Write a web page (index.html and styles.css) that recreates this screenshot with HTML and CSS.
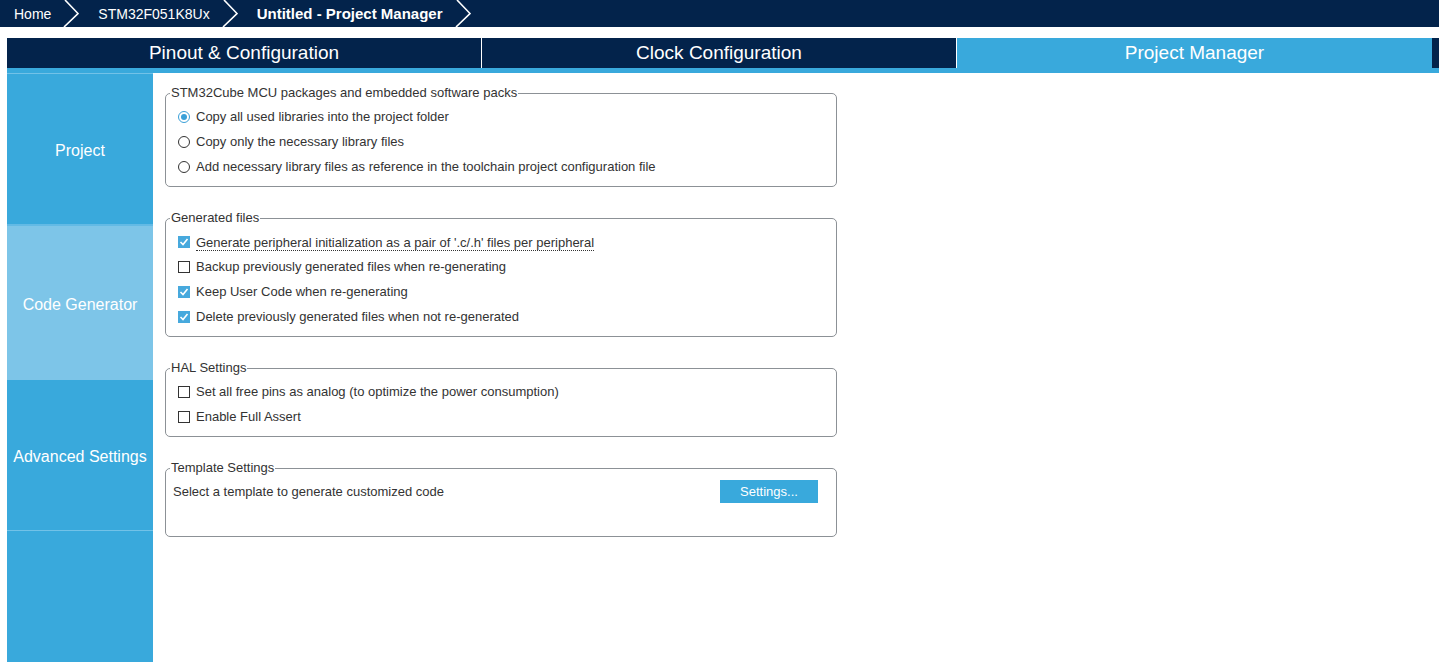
FILE: index.html
```html
<!DOCTYPE html>
<html lang="en">
<head>
    <meta charset="UTF-8">
    <title>Untitled - Project Manager</title>
    <link rel="stylesheet" href="styles.css">
</head>
<body>

    <!-- Breadcrumb bar -->
    <div class="topbar">
        <span class="crumb">Home</span>
        <svg class="chevron" width="16" height="27" viewBox="0 0 16 27"><polyline points="2,0 15,13.5 1,27" fill="none" stroke="#ffffff" stroke-width="1.6"/></svg>
        <span class="crumb">STM32F051K8Ux</span>
        <svg class="chevron" width="16" height="27" viewBox="0 0 16 27"><polyline points="2,0 15,13.5 1,27" fill="none" stroke="#ffffff" stroke-width="1.6"/></svg>
        <span class="crumb current">Untitled - Project Manager</span>
        <svg class="chevron" width="16" height="27" viewBox="0 0 16 27"><polyline points="2,0 15,13.5 1,27" fill="none" stroke="#ffffff" stroke-width="1.6"/></svg>
    </div>

    <div class="shell">
        <!-- Main tabs -->
        <div class="tabs">
            <div class="tab">Pinout &amp; Configuration</div>
            <div class="tab">Clock Configuration</div>
            <div class="tab active">Project Manager</div>
        </div>
        <div class="strip"></div>

        <div class="workspace">
            <!-- Side menu -->
            <div class="sidebar">
                <div class="side-item first">Project</div>
                <div class="side-item selected">Code Generator</div>
                <div class="side-item last">Advanced Settings</div>
            </div>

            <!-- Settings -->
            <div class="content">
                <fieldset class="group">
                    <legend>STM32Cube MCU packages and embedded software packs</legend>
                    <div class="option"><span class="radio on"></span><span>Copy all used libraries into the project folder</span></div>
                    <div class="option"><span class="radio"></span><span>Copy only the necessary library files</span></div>
                    <div class="option"><span class="radio"></span><span>Add necessary library files as reference in the toolchain project configuration file</span></div>
                </fieldset>

                <fieldset class="group">
                    <legend>Generated files</legend>
                    <div class="option"><span class="check on"><svg width="12" height="12" viewBox="0 0 12 12"><polyline points="2.5,6 5,8.5 9.5,3" fill="none" stroke="#ffffff" stroke-width="1.6"/></svg></span><span class="focused">Generate peripheral initialization as a pair of '.c/.h' files per peripheral</span></div>
                    <div class="option"><span class="check"></span><span>Backup previously generated files when re-generating</span></div>
                    <div class="option"><span class="check on"><svg width="12" height="12" viewBox="0 0 12 12"><polyline points="2.5,6 5,8.5 9.5,3" fill="none" stroke="#ffffff" stroke-width="1.6"/></svg></span><span>Keep User Code when re-generating</span></div>
                    <div class="option"><span class="check on"><svg width="12" height="12" viewBox="0 0 12 12"><polyline points="2.5,6 5,8.5 9.5,3" fill="none" stroke="#ffffff" stroke-width="1.6"/></svg></span><span>Delete previously generated files when not re-generated</span></div>
                </fieldset>

                <fieldset class="group">
                    <legend>HAL Settings</legend>
                    <div class="option"><span class="check"></span><span>Set all free pins as analog (to optimize the power consumption)</span></div>
                    <div class="option"><span class="check"></span><span>Enable Full Assert</span></div>
                </fieldset>

                <fieldset class="group template">
                    <legend>Template Settings</legend>
                    <div class="template-row">
                        <span class="template-text">Select a template to generate customized code</span>
                        <button class="settings-btn">Settings...</button>
                    </div>
                </fieldset>
            </div>
        </div>
    </div>

</body>
</html>
```

FILE: styles.css
```css
/* STM32CubeMX look */
body {
    font-family: 'Liberation Sans', Arial, sans-serif;
    background-color: #ffffff;
    color: #333333;
    margin: 0;
    padding: 0;
}

/* Breadcrumb bar */
.topbar {
    height: 27px;
    background-color: #03234b;
    display: flex;
    align-items: center;
    padding-left: 14px;
}

.crumb {
    color: #ffffff;
    font-size: 14px;
}

.crumb.current {
    font-size: 15px;
    font-weight: bold;
}

.chevron {
    display: block;
    margin: 0 19px 0 12px;
}

/* Tabs */
.shell {
    margin-top: 11px;
    padding-left: 7px;
}

.tabs {
    display: flex;
    height: 30px;
    background-color: #03234b;
}

.tab {
    width: 475px;
    box-sizing: border-box;
    border-right: 1px solid #ffffff;
    color: #ffffff;
    font-size: 19px;
    line-height: 30px;
    text-align: center;
}

.tab.active {
    background-color: #39a9dc;
    border-right: none;
}

.strip {
    height: 5px;
    background-color: #39a9dc;
}

/* Side menu */
.workspace {
    display: flex;
    height: calc(100vh - 73px);
}

.sidebar {
    width: 146px;
    flex-shrink: 0;
    background-color: #39a9dc;
}

.side-item {
    display: flex;
    align-items: center;
    justify-content: center;
    color: #ffffff;
    font-size: 16px;
    padding-top: 3px;
    box-sizing: border-box;
}

.side-item.first {
    height: 151px;
    border-top: 1px solid #72c2e8;
}

.side-item.selected {
    height: 156px;
    border-top: 2px solid #62bae5;
    background-color: #7dc5e8;
}

.side-item.last {
    height: 151px;
    border-bottom: 1px solid #72c2e8;
}

/* Settings groups */
.content {
    padding: 13px 0 0 12px;
}

.group {
    width: 672px;
    box-sizing: border-box;
    margin: 0 0 24px 0;
    padding: 4px 12px 7px 12px;
    border: 1px solid #8c9196;
    border-radius: 5px;
    font-size: 13px;
}

.group legend {
    margin-left: -8px;
    padding: 0 1px;
    font-size: 13px;
    line-height: 14px;
    color: #333333;
}

.option {
    display: flex;
    align-items: center;
    gap: 6px;
    height: 25px;
}

.radio {
    width: 12px;
    height: 12px;
    box-sizing: border-box;
    border: 1px solid #333333;
    border-radius: 50%;
    background-color: #ffffff;
    position: relative;
}

.radio.on {
    border-color: #3aa0d8;
}

.radio.on::after {
    content: "";
    position: absolute;
    left: 2px;
    top: 2px;
    width: 6px;
    height: 6px;
    border-radius: 50%;
    background-color: #3aa0d8;
}

.check {
    width: 12px;
    height: 12px;
    box-sizing: border-box;
    border: 1px solid #333333;
    background-color: #ffffff;
    display: flex;
}

.check.on {
    border: none;
    background-color: #47a9dd;
}

.focused {
    border-bottom: 1px dotted #333333;
    line-height: 15px;
    position: relative;
    top: 1px;
}

/* Template settings */
.group.template {
    padding-bottom: 32px;
}

.template-row {
    display: flex;
    align-items: center;
    height: 25px;
    margin-left: -5px;
}

.template-text {
    width: 547px;
}

.settings-btn {
    width: 98px;
    height: 23px;
    border: none;
    background-color: #39a9dc;
    color: #ffffff;
    font-family: 'Liberation Sans', Arial, sans-serif;
    font-size: 13px;
    padding: 0;
}
```
